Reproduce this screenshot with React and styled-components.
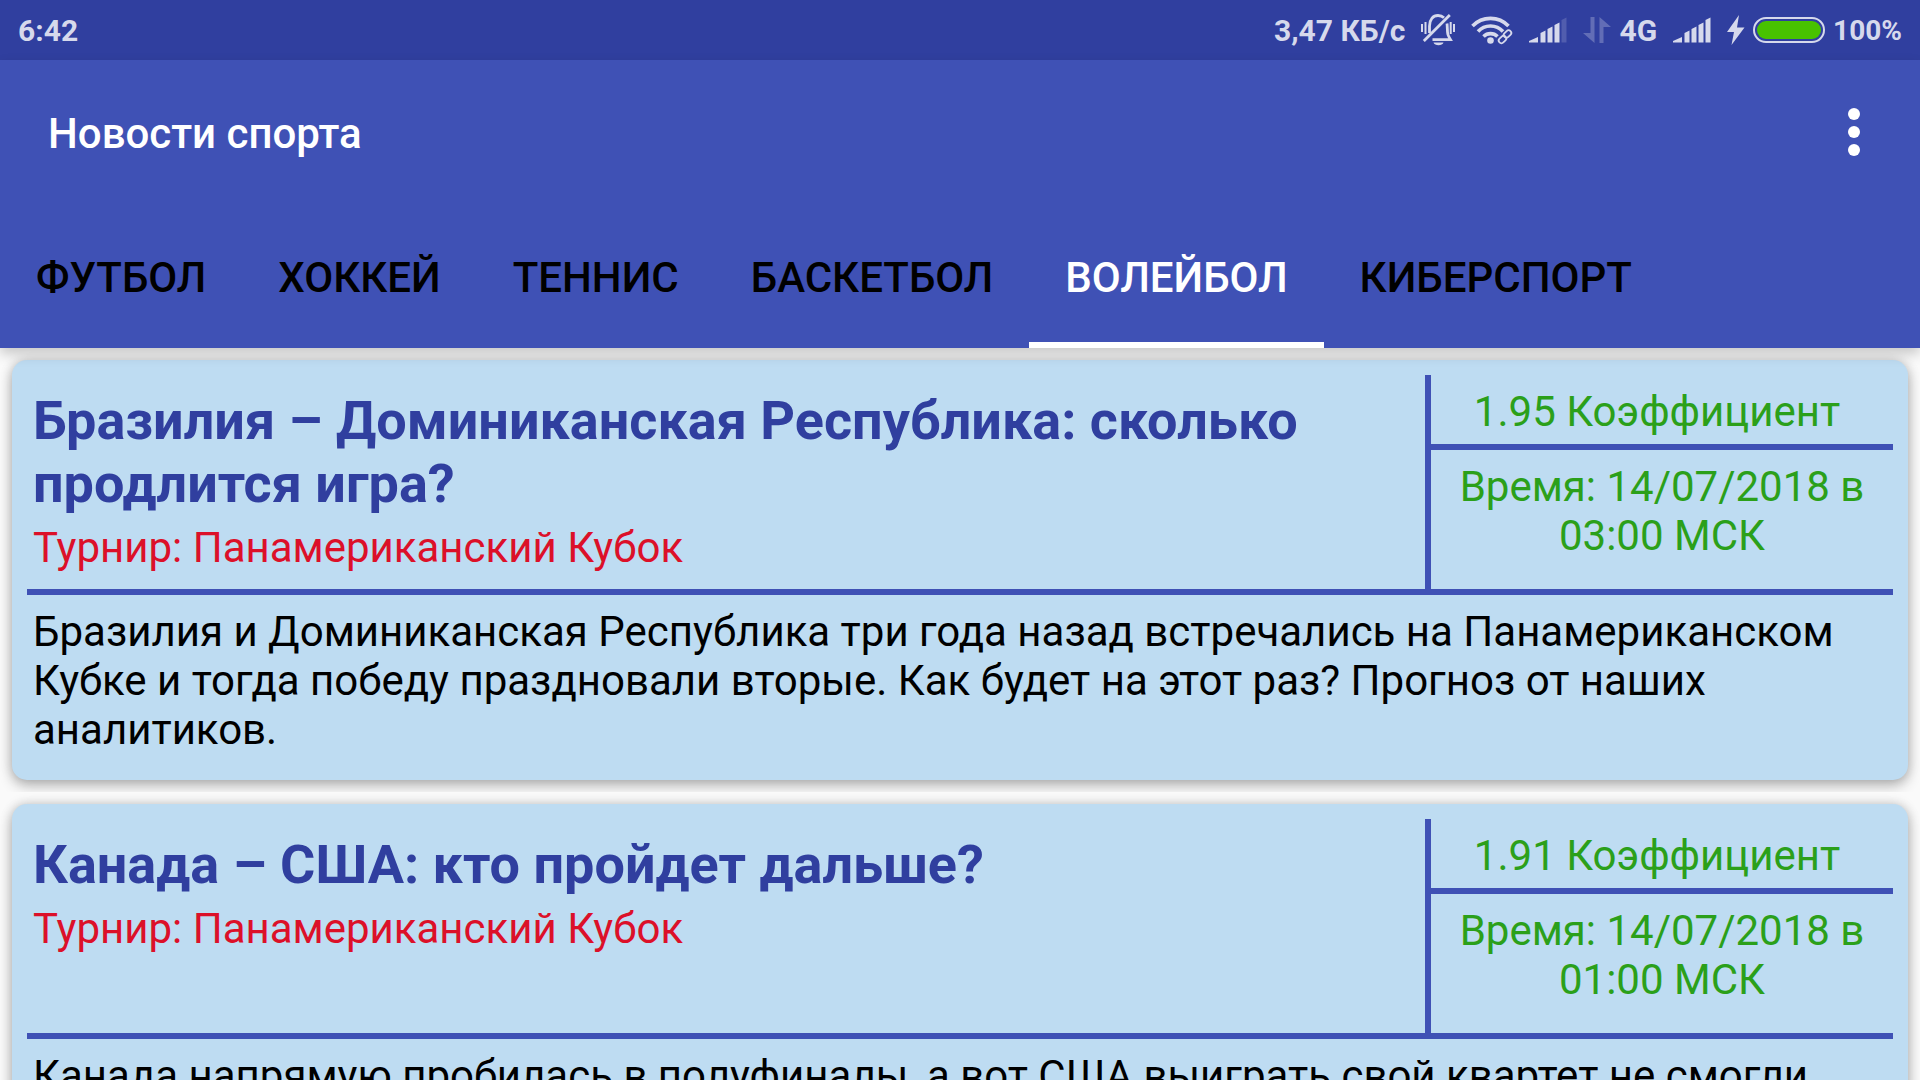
import React, { useState } from "react";
import styled, { createGlobalStyle } from "styled-components";

const GlobalStyle = createGlobalStyle`
  * { box-sizing: border-box; }
  body {
    margin: 0;
    background: #fafafa;
    font-family: Roboto, "Noto Sans", sans-serif;
    font-size: 42px;
    line-height: 49px;
    color: #000;
  }
  h1, h2, p { margin: 0; }
`;

const Screen = styled.div`
  display: flex;
  flex-direction: column;
  height: 100vh;
  overflow: hidden;
`;

const StatusBar = styled.div`
  display: flex;
  align-items: center;
  justify-content: space-between;
  flex: none;
  height: 60px;
  padding: 0 18px;
  background: #303f9f;
  color: #d6d9ec;
`;

const StatusIcons = styled.div`
  display: flex;
  align-items: center;
  gap: 16px;
`;

const StatusGroup = styled.div`
  display: flex;
  align-items: center;
  gap: 8px;
`;

const StatusIcon = styled.svg`
  display: block;
  flex: none;
  fill: #d6d9ec;
`;

const StatusText = styled.span`
  padding-top: 2px;
  font-size: ${(p) => (p.$small ? 28 : 30)}px;
  font-weight: 700;
  line-height: 36px;
`;

const Header = styled.header`
  position: relative;
  z-index: 1;
  flex: none;
  background: #3f51b5;
  box-shadow: 0 6px 12px rgba(0, 0, 0, 0.2);
`;

const Toolbar = styled.div`
  display: flex;
  align-items: center;
  justify-content: space-between;
  height: 144px;
  padding: 0 30px 0 48px;
`;

const AppTitle = styled.h1`
  padding-top: 2px;
  color: #fff;
  font-size: 42px;
  font-weight: 500;
  line-height: 49px;
`;

const MenuButton = styled.button`
  display: flex;
  flex-direction: column;
  align-items: center;
  justify-content: center;
  gap: 6px;
  width: 72px;
  height: 96px;
  padding: 0;
  border: 0;
  background: none;
  cursor: pointer;
`;

const Dot = styled.span`
  width: 12px;
  height: 12px;
  border-radius: 50%;
  background: #fff;
`;

const Tabs = styled.nav`
  display: flex;
  height: 144px;
`;

const Tab = styled.button`
  padding: 8px 36px 0;
  border: 0;
  border-bottom: 6px solid ${(p) => (p.$active ? "#fff" : "transparent")};
  background: none;
  color: ${(p) => (p.$active ? "#fff" : "#000")};
  font: 500 42px/49px Roboto, "Noto Sans", sans-serif;
  text-transform: uppercase;
  cursor: pointer;
`;

const NewsList = styled.main`
  flex: 1;
  min-height: 0;
  overflow: hidden;
`;

const NewsItem = styled.div`
  padding: 12px;
  overflow: hidden;
`;

const Card = styled.article`
  padding: 15px 15px 26px;
  border-radius: 15px;
  background: #bedcf2;
  box-shadow: 0 6px 14px rgba(0, 0, 0, 0.24), 0 0 12px rgba(0, 0, 0, 0.18);
`;

const CardTop = styled.div`
  display: flex;
  min-height: 220px;
  border-bottom: 6px solid #3f51b5;
`;

const Summary = styled.div`
  flex: 1;
  display: flex;
  flex-direction: column;
  gap: 8px;
  padding: 14px 6px 8px;
`;

const CardTitle = styled.h2`
  color: #303f9f;
  font-size: 54px;
  font-weight: 700;
  line-height: 63px;
`;

const Tournament = styled.p`
  color: #dc1029;
`;

const Facts = styled.div`
  flex: none;
  width: 468px;
  border-left: 6px solid #3f51b5;
  color: #2ba01a;
  text-align: center;
`;

const Odds = styled.p`
  padding: 12px 10px 8px 0;
  border-bottom: 6px solid #3f51b5;
`;

const MatchTime = styled.p`
  padding: 12px 6px;
`;

const Body = styled.p`
  padding: 12px 6px 0;
`;

function BellOffIcon() {
  return (
    <StatusIcon width="34" height="32" viewBox="0 0 34 32">
      <g fill="none" stroke="#d6d9ec" strokeWidth="2.800">
        <path d="M8.500 19V12C8.500 5.500 12 1.500 17 1.500c2.500 0 4.500.8 6 2.200M26 9.500c.4 2 .2 8 .8 10.500 .4 2 1.500 3.500 2.700 5.600H11.500" />
        <path d="M2.800 27 28.800 1" />
        <path d="M1 10v8M4.500 8v12M29.700 8v12M33 10v8" strokeWidth="2" />
      </g>
      <path d="M12.500 28.500h10c-1 3.500-9 3.500-10 0z" />
    </StatusIcon>
  );
}

function WifiIcon() {
  return (
    <StatusIcon width="42" height="30" viewBox="0 0 42 30">
      <g fill="none" stroke="#d6d9ec" strokeWidth="3.600">
        <path d="M1.500 11a25 25 0 0 1 36 0" />
        <path d="M7 16.500a17 17 0 0 1 25 0" />
        <path d="M12.500 21.500a10 10 0 0 1 14 0" />
      </g>
      <circle cx="19.500" cy="25.500" r="3.300" />
      <path d="M25 29 41 14v15z" fill="#303f9f" />
      <g fill="none" stroke="#d6d9ec" strokeWidth="1.800">
        <rect x="-4.200" y="-2.700" width="8.400" height="5.400" rx="2.700" transform="translate(36.500 19) rotate(-45)" />
        <rect x="-4.200" y="-2.700" width="8.400" height="5.400" rx="2.700" transform="translate(31.500 24.500) rotate(-45)" />
      </g>
    </StatusIcon>
  );
}

function SignalIcon({ weak }) {
  return (
    <StatusIcon width="38" height="26" viewBox="0 0 38 26">
      <path d="M0 25.500v-1.500l9-4v5.500zM11.500 25.500V16l5-2.500v12zM18.500 25.500V12l5-2.500v16zM25.500 25.500V8l5-2.500v20z" />
      <path d="M32.500 25.500V3l5-2.500v25z" opacity={weak ? 0.2 : 1} />
    </StatusIcon>
  );
}

function DataArrowsIcon() {
  return (
    <StatusIcon width="28" height="26" viewBox="0 0 28 26" opacity="0.300">
      <path d="M7.500 0h4v26L0 16h7.500zM16.500 26h4V10H28L16.500 0z" />
    </StatusIcon>
  );
}

function BoltIcon() {
  return (
    <StatusIcon width="18" height="30" viewBox="0 0 18 30">
      <path d="M12 0 0 17h7L4.500 30 17.500 12.500H10z" />
    </StatusIcon>
  );
}

function BatteryIcon() {
  return (
    <StatusIcon width="72" height="26" viewBox="0 0 72 26">
      <rect x="1" y="1" width="70" height="24" rx="12" fill="none" stroke="#d6d9ec" strokeWidth="2" />
      <rect x="4" y="4" width="64" height="18" rx="9" fill="#48c200" />
    </StatusIcon>
  );
}

const tabs = ["Футбол", "Хоккей", "Теннис", "Баскетбол", "Волейбол", "Киберспорт"];

const news = [
  {
    title: "Бразилия – Доминиканская Республика: сколько продлится игра?",
    tournament: "Панамериканский Кубок",
    odds: "1.95",
    time: "14/07/2018 в 03:00 МСК",
    body: "Бразилия и Доминиканская Республика три года назад встречались на Панамериканском Кубке и тогда победу праздновали вторые. Как будет на этот раз? Прогноз от наших аналитиков.",
  },
  {
    title: "Канада – США: кто пройдет дальше?",
    tournament: "Панамериканский Кубок",
    odds: "1.91",
    time: "14/07/2018 в 01:00 МСК",
    body: "Канада напрямую пробилась в полуфиналы, а вот США выиграть свой квартет не смогли",
  },
];

export default function App() {
  const [active, setActive] = useState("Волейбол");
  return (
    <Screen>
      <GlobalStyle />
      <StatusBar>
        <StatusText>6:42</StatusText>
        <StatusIcons>
          <StatusText>3,47 КБ/с</StatusText>
          <BellOffIcon />
          <WifiIcon />
          <SignalIcon weak />
          <StatusGroup>
            <DataArrowsIcon />
            <StatusText>4G</StatusText>
          </StatusGroup>
          <SignalIcon />
          <StatusGroup>
            <BoltIcon />
            <BatteryIcon />
            <StatusText $small>100%</StatusText>
          </StatusGroup>
        </StatusIcons>
      </StatusBar>
      <Header>
        <Toolbar>
          <AppTitle>Новости спорта</AppTitle>
          <MenuButton aria-label="Меню">
            <Dot />
            <Dot />
            <Dot />
          </MenuButton>
        </Toolbar>
        <Tabs>
          {tabs.map((tab) => (
            <Tab key={tab} $active={tab === active} onClick={() => setActive(tab)}>
              {tab}
            </Tab>
          ))}
        </Tabs>
      </Header>
      <NewsList>
        {news.map((item) => (
          <NewsItem key={item.title}>
            <Card>
              <CardTop>
                <Summary>
                  <CardTitle>{item.title}</CardTitle>
                  <Tournament>{`Турнир: ${item.tournament}`}</Tournament>
                </Summary>
                <Facts>
                  <Odds>{`${item.odds} Коэффициент`}</Odds>
                  <MatchTime>{`Время: ${item.time}`}</MatchTime>
                </Facts>
              </CardTop>
              <Body>{item.body}</Body>
            </Card>
          </NewsItem>
        ))}
      </NewsList>
    </Screen>
  );
}
